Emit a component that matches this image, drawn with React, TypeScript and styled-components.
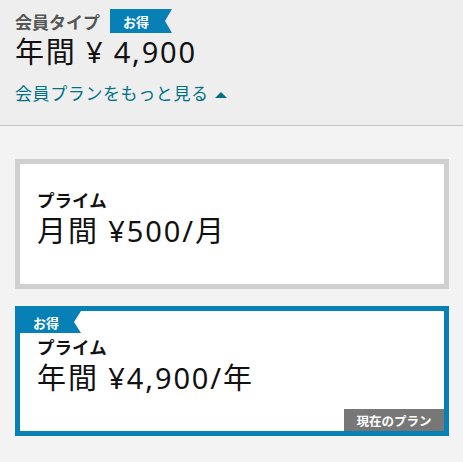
import styled, { createGlobalStyle } from "styled-components";

const GlobalStyle = createGlobalStyle`
  *, *::before, *::after {
    box-sizing: border-box;
  }

  html, body {
    margin: 0;
    padding: 0;
    background: #f3f3f3;
  }

  body {
    font-family: "Noto Sans", "Noto Sans CJK JP", sans-serif;
    color: #111;
  }
`;

const BLUE = "#0780b5";

const Header = styled.header`
  background: #eeeeee;
  border-bottom: 1px solid #c4c4c4;
  padding: 7px 15px 0;
  height: 126px;
`;

const TitleRow = styled.div`
  display: flex;
  align-items: center;
  gap: 10px;
  height: 28px;
`;

const Title = styled.h2`
  margin: 0;
  font-size: 17px;
  font-weight: bold;
  color: #555;
`;

const DealFlag = styled.span`
  display: inline-flex;
  align-items: center;
  height: 24px;
  padding: 0 23px 0 13px;
  background: ${BLUE};
  color: #fff;
  font-size: 13px;
  font-weight: bold;
  clip-path: polygon(0 0, 100% 0, calc(100% - 7px) 50%, 100% 100%, 0 100%);
`;

const Price = styled.div`
  font-size: 29px;
  line-height: 34px;
  letter-spacing: 1.8px;
`;

const MoreLink = styled.a`
  display: inline-flex;
  align-items: center;
  gap: 6px;
  margin-top: 13px;
  font-size: 17px;
  line-height: 24px;
  letter-spacing: 0.6px;
  color: #007185;
  text-decoration: none;
  cursor: pointer;
`;

const Caret = styled.span`
  width: 0;
  height: 0;
  border-left: 6px solid transparent;
  border-right: 6px solid transparent;
  border-bottom: 6px solid #007185;
  margin-top: 1px;
`;

const PlanList = styled.main`
  display: flex;
  flex-direction: column;
  gap: 17px;
  padding: 33px 14px 0 15px;
`;

const PlanCard = styled.div<{ $selected?: boolean }>`
  position: relative;
  height: 130px;
  background: #fff;
  border: 5px solid ${(p) => (p.$selected ? BLUE : "#d0d0d0")};
  padding: 24px 17px 0;
`;

const CardFlag = styled(DealFlag)`
  position: absolute;
  top: 0;
  left: 0;
  height: 22px;
  padding: 0 22px 0 13px;
`;

const PlanName = styled.div`
  font-size: 17.5px;
  font-weight: bold;
  line-height: 24px;
`;

const PlanPrice = styled.div`
  font-size: 29px;
  line-height: 38px;
  letter-spacing: 1.9px;
`;

const CurrentTag = styled.span`
  position: absolute;
  right: 0;
  bottom: 0;
  width: 100px;
  height: 22px;
  display: flex;
  align-items: center;
  justify-content: center;
  background: #777;
  color: #fff;
  font-size: 12.5px;
  font-weight: bold;
`;

const plans = [
  { name: "プライム", price: "月間 ¥500/月", selected: false },
  { name: "プライム", price: "年間 ¥4,900/年", selected: true },
];

export default function App() {
  return (
    <>
      <GlobalStyle />
      <Header>
        <TitleRow>
          <Title>会員タイプ</Title>
          <DealFlag>お得</DealFlag>
        </TitleRow>
        <Price>年間 ¥ 4,900</Price>
        <MoreLink>
          会員プランをもっと見る
          <Caret />
        </MoreLink>
      </Header>

      <PlanList>
        {plans.map((plan) => (
          <PlanCard key={plan.price} $selected={plan.selected}>
            {plan.selected && <CardFlag>お得</CardFlag>}
            <PlanName>{plan.name}</PlanName>
            <PlanPrice>{plan.price}</PlanPrice>
            {plan.selected && <CurrentTag>現在のプラン</CurrentTag>}
          </PlanCard>
        ))}
      </PlanList>
    </>
  );
}
